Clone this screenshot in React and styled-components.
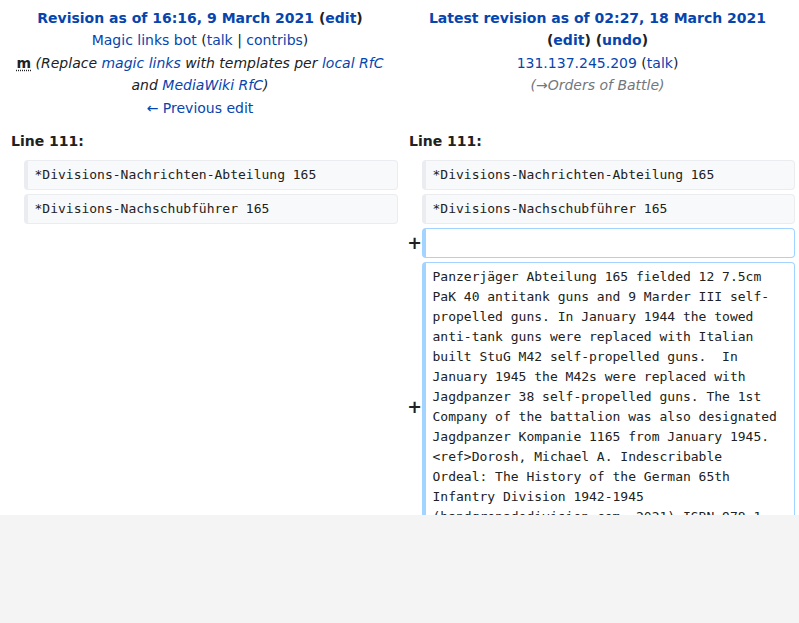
import React from 'react'
import styled, { createGlobalStyle } from 'styled-components'

const GlobalStyle = createGlobalStyle`
  html, body {
    margin: 0;
    padding: 0;
    background: #f4f4f4;
  }
  body {
    font-family: "DejaVu Sans", "Noto Sans", sans-serif;
    color: #202122;
  }
`

const Page = styled.div`
  height: 515px;
  overflow: hidden;
  background: #fff;
`

const DiffGrid = styled.div`
  display: grid;
  grid-template-columns: 20px 374px 20px 373px;
  column-gap: 2px;
  row-gap: 4px;
  padding: 4px 4px 0 2px;
  font-size: 14px;
`

const TitleCell = styled.div`
  grid-column: span 2;
  text-align: center;
  line-height: 22.4px;
  padding: 3px 5px;
`

const Link = styled.a`
  color: #0645ad;
  text-decoration: none;
  cursor: pointer;
`

const Minor = styled.abbr`
  font-weight: bold;
  text-decoration: underline dotted;
  text-underline-offset: 2px;
  cursor: help;
`

const Comment = styled.span`
  font-style: italic;
  color: ${(p) => (p.$muted ? '#72777d' : '#202122')};
`

const LineNo = styled.div`
  grid-column: span 2;
  font-weight: bold;
  line-height: 22.4px;
  padding: 4px 9px;
`

const Marker = styled.div`
  display: flex;
  align-items: center;
  justify-content: flex-end;
  font-size: 17.5px;
  font-weight: bold;
  line-height: 1;
  margin-right: -2px;
`

const Line = styled.div`
  font-family: "DejaVu Sans Mono", "Liberation Mono", monospace;
  font-size: 13px;
  line-height: 20px;
  white-space: pre-wrap;
  overflow-wrap: break-word;
  padding: 4px 12px 4px 6.5px;
  border-style: solid;
  border-width: 1px 1px 1px 4px;
  border-radius: 4px;
  border-color: ${(p) => (p.$added ? '#a3d3ff' : '#eaecf0')};
  background: ${(p) => (p.$added ? '#fff' : '#f8f9fa')};
  min-height: 20px;
`

const Empty = styled.div`
  grid-column: span 2;
`

const addedText =
  'Panzerjäger Abteilung 165 fielded 12 7.5cm PaK 40 antitank guns and 9 Marder III self-propelled guns. In January 1944 the towed anti-tank guns were replaced with Italian built StuG M42 self-propelled guns.  In January 1945 the M42s were replaced with Jagdpanzer 38 self-propelled guns. The 1st Company of the battalion was also designated Jagdpanzer Kompanie 1165 from January 1945. <ref>Dorosh, Michael A. Indescribable Ordeal: The History of the German 65th Infantry Division 1942-1945 (handgrenadedivision.com, 2021) ISBN 978-1-\n7366985-0-6.</ref>'

const context = [
  '*Divisions-Nachrichten-Abteilung 165',
  '*Divisions-Nachschubführer 165',
]

const added = ['', addedText]

export default function App() {
  return (
    <Page>
      <GlobalStyle />
      <DiffGrid>
        <TitleCell>
          <div>
            <strong>
              <Link>Revision as of 16:16, 9 March 2021</Link> (<Link>edit</Link>)
            </strong>
          </div>
          <div>
            <Link>Magic links bot</Link> (<Link>talk</Link> | <Link>contribs</Link>)
          </div>
          <div>
            <Minor title="This is a minor edit">m</Minor>{' '}
            <Comment>
              (Replace <Link>magic links</Link> with templates per <Link>local RfC</Link> and{' '}
              <Link>MediaWiki RfC</Link>)
            </Comment>
          </div>
          <div>
            <Link>← Previous edit</Link>
          </div>
        </TitleCell>
        <TitleCell>
          <div>
            <strong>
              <Link>Latest revision as of 02:27, 18 March 2021</Link> (<Link>edit</Link>) (<Link>undo</Link>)
            </strong>
          </div>
          <div>
            <Link>131.137.245.209</Link> (<Link>talk</Link>)
          </div>
          <div>
            <Comment $muted>(→Orders of Battle)</Comment>
          </div>
        </TitleCell>

        <LineNo>Line 111:</LineNo>
        <LineNo>Line 111:</LineNo>

        {context.map((text) => (
          <React.Fragment key={text}>
            <Marker />
            <Line>{text}</Line>
            <Marker />
            <Line>{text}</Line>
          </React.Fragment>
        ))}

        {added.map((text, i) => (
          <React.Fragment key={i}>
            <Empty />
            <Marker>+</Marker>
            <Line $added>{text}</Line>
          </React.Fragment>
        ))}
      </DiffGrid>
    </Page>
  )
}
